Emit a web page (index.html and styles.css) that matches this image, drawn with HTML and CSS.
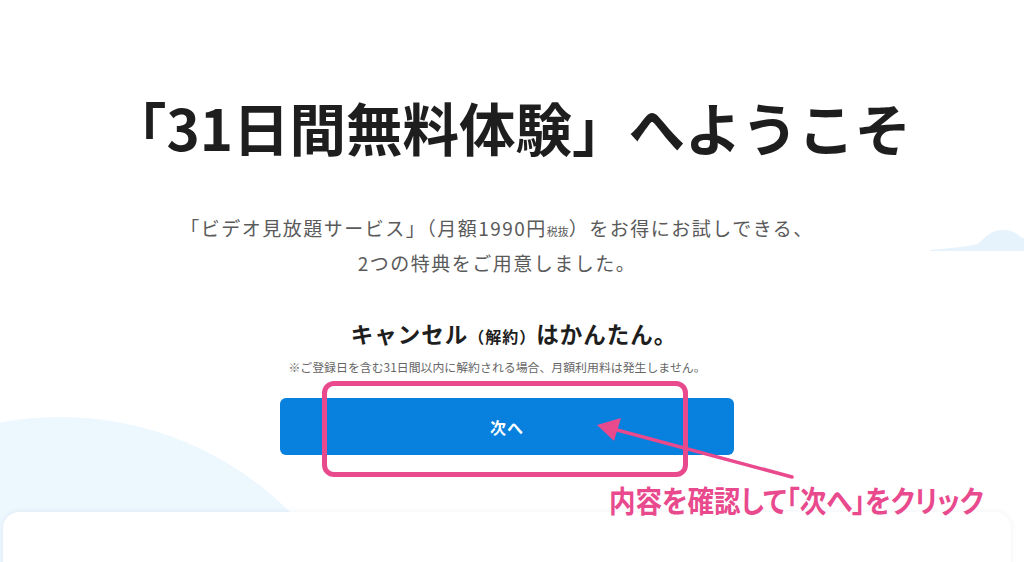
FILE: index.html
```html
<!DOCTYPE html>
<html lang="ja">
<head>
<meta charset="utf-8">
<title>31日間無料体験</title>
<link rel="stylesheet" href="styles.css">
</head>
<body>
<div class="page">
  <div class="bg-circle"></div>
  <svg class="bg-cloud" width="100" height="30" viewBox="0 0 100 30">
    <path d="M0 28 C20 26 35 25 48 22 C56 14 62 8 72 8 C82 8 88 12 92 16 L100 16 L100 29 L0 29 Z" fill="#e6f3fc"/>
  </svg>

  <main class="main">
    <h1 class="title">「31日間無料体験」へようこそ</h1>
    <p class="lead">「ビデオ見放題サービス」（月額1990円<small>税抜</small>）をお得にお試しできる、<br>2つの特典をご用意しました。</p>
    <h2 class="cancel">キャンセル<small>（解約）</small>はかんたん。</h2>
    <p class="note">※ご登録日を含む31日間以内に解約される場合、月額利用料は発生しません。</p>
    <button class="next" type="button">次へ</button>
    <section class="card"></section>
  </main>

  <div class="annot-box"></div>
  <svg class="annot-arrow" width="1024" height="562" viewBox="0 0 1024 562">
    <line x1="792" y1="477" x2="606" y2="427" stroke="#e9498d" stroke-width="3.5" stroke-linecap="round"/>
    <polygon points="597,425 621,418 614,441" fill="#e9498d"/>
  </svg>
  <p class="annot-text"><span>内容を確認して「次へ」をクリック</span></p>
</div>
</body>
</html>
```

FILE: styles.css
```css
html, body {
  margin: 0;
  padding: 0;
  background: #fff;
}
body {
  font-family: "Noto Sans CJK JP", "Noto Sans", sans-serif;
  color: #222;
}
.page {
  position: relative;
  width: 1024px;
  height: 562px;
  overflow: hidden;
  background: #fff;
}
.bg-circle {
  position: absolute;
  left: -266px;
  top: 417px;
  width: 652px;
  height: 652px;
  border-radius: 50%;
  background: #edf7fe;
}
.bg-cloud {
  position: absolute;
  left: 930px;
  top: 222px;
}
.main {
  position: relative;
  display: flex;
  flex-direction: column;
  align-items: center;
  padding-right: 10px;
}
.title {
  margin: 92px 0 0;
  padding-left: 7px;
  font-size: 56.5px;
  line-height: 68px;
  font-weight: 700;
  color: #1e1e1e;
  letter-spacing: 0;
  white-space: nowrap;
}
.lead {
  margin: 50px 0 0;
  font-size: 19px;
  line-height: 35px;
  letter-spacing: 1.5px;
  color: #5a5a5a;
  text-align: center;
  padding-right: 20px;
}
.lead small {
  font-size: 11px;
  line-height: 1;
  letter-spacing: 0;
}
.cancel {
  margin: 38px 0 0;
  padding-left: 14px;
  font-size: 22.5px;
  line-height: 30px;
  font-weight: 700;
  color: #1e1e1e;
  letter-spacing: 1px;
}
.cancel small {
  font-size: 16px;
  line-height: 1;
  font-weight: 700;
}
.note {
  margin: 10px 0 0;
  padding-right: 20px;
  font-size: 11.9px;
  line-height: 18px;
  color: #666;
}
.next {
  margin-top: 22px;
  width: 454px;
  height: 57px;
  border: none;
  border-radius: 6px;
  background: #0780de;
  color: #fff;
  font-family: inherit;
  font-size: 16px;
  font-weight: 700;
  letter-spacing: 1px;
}
.card {
  align-self: stretch;
  margin: 57px 3px 0 3px;
  height: 80px;
  background: #fff;
  border-radius: 16px;
  box-shadow: 0 0 6px rgba(0, 60, 120, 0.08);
}
.annot-box {
  position: absolute;
  left: 322px;
  top: 381px;
  width: 356px;
  height: 86px;
  border: 5px solid #e9498d;
  border-radius: 12px;
}
.annot-arrow {
  position: absolute;
  left: 0;
  top: 0;
}
.annot-text {
  position: absolute;
  left: 609px;
  top: 479px;
  margin: 0;
  font-size: 30px;
  line-height: 40px;
  font-weight: 700;
  color: #e9498d;
  white-space: nowrap;
  font-feature-settings: "palt";
}
.annot-text span {
  display: inline-block;
  transform: scaleX(0.885);
  transform-origin: left center;
}
```
